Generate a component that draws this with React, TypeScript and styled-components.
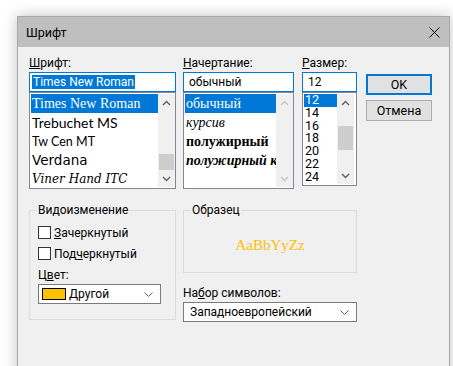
import React from 'react';
import styled, {createGlobalStyle} from 'styled-components';

const GlobalStyle = createGlobalStyle`
    html, body {
        margin: 0;
        padding: 0;
        background: #ffffff;
        overflow: hidden;
    }
    body {
        font-family: Roboto, "Segoe UI", sans-serif;
        font-size: 12px;
        color: #000000;
    }
`;

const Page = styled.div`
    padding: 16px 0 0 17px;
    height: 366px;
    box-sizing: border-box;
`;

const Dialog = styled.div`
    width: 433px;
    height: 380px;
    box-sizing: border-box;
    border: 1px solid #a9a9a9;
    background: #f0f0f0;
    box-shadow: 0 0 14px rgba(0, 0, 0, 0.24);
`;

const TitleBar = styled.div`
    height: 30px;
    background: #bfbfbf;
    display: flex;
    align-items: center;
    justify-content: space-between;
    padding: 0 9px 0 8px;
`;

const Title = styled.span`
    font-size: 12.5px;
`;

const Body = styled.div`
    padding: 9px 0 0 11px;
`;

const TopRow = styled.div`
    display: flex;
    align-items: flex-start;
`;

const Column = styled.div<{$width: number; $gap: number}>`
    width: ${({$width}) => $width}px;
    margin-right: ${({$gap}) => $gap}px;
    display: flex;
    flex-direction: column;
`;

const FieldLabel = styled.div<{$space?: number}>`
    height: 15px;
    line-height: 15px;
    margin-top: ${({$space}) => $space ?? 0}px;
    margin-bottom: 1px;
    white-space: nowrap;
`;

const Accel = styled.span`
    text-decoration: underline;
`;

const TextInput = styled.div`
    height: 20px;
    box-sizing: border-box;
    border: 1px solid #0078d7;
    background: #ffffff;
    padding-left: 2px;
    line-height: 18px;
    white-space: nowrap;
    overflow: hidden;
`;

const SelectedText = styled.span`
    background: #0078d7;
    color: #ffffff;
    padding: 0 1px;
`;

const ListBox = styled.div<{$height: number}>`
    height: ${({$height}) => $height}px;
    box-sizing: border-box;
    border: 1px solid #828790;
    background: #ffffff;
    display: flex;
    padding: 1px 0 0 1px;
`;

const ListItems = styled.div`
    flex: 1;
    min-width: 0;
    overflow: hidden;
`;

const ListItem = styled.div<{$selected?: boolean; $family: string; $size: number; $italic?: boolean; $bold?: boolean; $row: number}>`
    height: ${({$row}) => $row}px;
    line-height: ${({$row}) => $row}px;
    padding-left: 1px;
    white-space: nowrap;
    font-family: ${({$family}) => $family};
    font-size: ${({$size}) => $size}px;
    font-style: ${({$italic}) => ($italic ? 'italic' : 'normal')};
    font-weight: ${({$bold}) => ($bold ? 700 : 400)};
    background: ${({$selected}) => ($selected ? '#0078d7' : 'transparent')};
    color: ${({$selected}) => ($selected ? '#ffffff' : '#000000')};
`;

const ScrollBar = styled.div<{$inset?: number}>`
    width: 17px;
    margin-right: ${({$inset}) => $inset ?? 0}px;
    margin-bottom: 1px;
    background: #f0f0f0;
    display: flex;
    flex-direction: column;
`;

const ScrollArrow = styled.div`
    height: 17px;
    display: flex;
    align-items: center;
    justify-content: center;
`;

const ScrollTrack = styled.div`
    flex: 1;
    display: flex;
    flex-direction: column;
    align-items: center;
`;

const ScrollThumb = styled.div<{$offset: number; $length: number}>`
    margin-top: ${({$offset}) => $offset}px;
    height: ${({$length}) => $length}px;
    width: 15px;
    background: #cdcdcd;
`;

const ButtonColumn = styled.div`
    width: 66px;
    padding-top: 18px;
    display: flex;
    flex-direction: column;
    gap: 5px;
`;

const DialogButton = styled.div<{$primary?: boolean}>`
    height: 21px;
    box-sizing: border-box;
    background: #e1e1e1;
    border: ${({$primary}) => ($primary ? '2px solid #0078d7' : '1px solid #adadad')};
    display: flex;
    align-items: center;
    justify-content: center;
    font-size: 12.5px;
`;

const BottomRow = styled.div`
    display: flex;
    align-items: flex-start;
`;

const GroupBox = styled.div<{$width: number; $height: number}>`
    position: relative;
    width: ${({$width}) => $width}px;
    height: ${({$height}) => $height}px;
    margin-top: 21px;
    box-sizing: border-box;
    border: 1px solid #dcdcdc;
`;

const GroupLegend = styled.span`
    position: absolute;
    top: -8px;
    left: 7px;
    line-height: 15px;
    padding: 0 1px;
    background: #f0f0f0;
`;

const GroupContent = styled.div`
    padding: 15px 8px 0 8px;
`;

const CheckRow = styled.div`
    height: 13px;
    display: flex;
    align-items: center;
    gap: 3px;
    margin-bottom: 8px;
    white-space: nowrap;
`;

const CheckBox = styled.div`
    width: 13px;
    height: 13px;
    box-sizing: border-box;
    border: 1px solid #333333;
    background: #ffffff;
    flex-shrink: 0;
`;

const ComboBox = styled.div<{$width: number}>`
    width: ${({$width}) => $width}px;
    height: 20px;
    box-sizing: border-box;
    border: 1px solid #7a7a7a;
    background: #ffffff;
    display: flex;
    align-items: center;
    padding: 0 7px 0 3px;
    white-space: nowrap;
`;

const ComboText = styled.span`
    flex: 1;
    margin-left: 3px;
`;

const ColorSwatch = styled.div<{$color: string}>`
    width: 24px;
    height: 12px;
    box-sizing: border-box;
    border: 1px solid #000000;
    background: ${({$color}) => $color};
`;

const SampleArea = styled.div`
    height: 100%;
    display: flex;
    align-items: center;
    justify-content: center;
    padding-top: 8px;
    box-sizing: border-box;
`;

const SampleText = styled.span<{$color: string}>`
    font-family: "Liberation Serif", "Times New Roman", serif;
    font-size: 15px;
    color: ${({$color}) => $color};
`;

const RightColumn = styled.div`
    width: 174px;
    display: flex;
    flex-direction: column;
`;

const Chevron = ({up = false, color}: {up?: boolean; color: string}) => (
    <svg width='9' height='6' viewBox='0 0 9 6'>
        <path d={up ? 'M1 5 L4.5 1.5 L8 5' : 'M1 1 L4.5 4.5 L8 1'} fill='none' stroke={color} strokeWidth='1.4' />
    </svg>
);

const ComboChevron = () => (
    <svg width='9' height='5' viewBox='0 0 9 5'>
        <path d='M0.5 0.5 L4.5 4.5 L8.5 0.5' fill='none' stroke='#606060' strokeWidth='1' />
    </svg>
);

const CloseIcon = () => (
    <svg width='11' height='11' viewBox='0 0 11 11'>
        <path d='M0.5 0.5 L10.5 10.5 M10.5 0.5 L0.5 10.5' stroke='#000000' strokeWidth='1' />
    </svg>
);

interface ScrollProps {
    offset: number;
    length: number;
    disabled?: boolean;
    inset?: number;
}

const Scroller = ({offset, length, disabled, inset}: ScrollProps) => {
    const color = disabled ? '#c5c5c5' : '#606060';

    return (
        <ScrollBar $inset={inset}>
            <ScrollArrow><Chevron up color={color} /></ScrollArrow>
            <ScrollTrack>
                {!disabled && <ScrollThumb $offset={offset} $length={length} />}
            </ScrollTrack>
            <ScrollArrow><Chevron color={color} /></ScrollArrow>
        </ScrollBar>
    );
};

const fonts = [
    {name: 'Times New Roman', family: '"Liberation Serif", serif', size: 14},
    {name: 'Trebuchet MS', family: 'Lato, sans-serif', size: 14},
    {name: 'Tw Cen MT', family: 'Lato, sans-serif', size: 12.5},
    {name: 'Verdana', family: '"DejaVu Sans", sans-serif', size: 13.5},
    {name: 'Viner Hand ITC', family: '"DejaVu Serif", serif', size: 12, italic: true},
];

const styles = [
    {name: 'обычный'},
    {name: 'курсив', italic: true},
    {name: 'полужирный', bold: true},
    {name: 'полужирный курсив', bold: true, italic: true},
];

const sizes = ['12', '14', '16', '18', '20', '22', '24'];

const serif = '"Liberation Serif", serif';
const sans = 'Roboto, sans-serif';
const textColor = '#ffc000';

const App = () => {
    return (
        <>
            <GlobalStyle />
            <Page>
                <Dialog>
                    <TitleBar>
                        <Title>Шрифт</Title>
                        <CloseIcon />
                    </TitleBar>
                    <Body>
                        <TopRow>
                            <Column $width={147} $gap={7}>
                                <FieldLabel><Accel>Ш</Accel>рифт:</FieldLabel>
                                <TextInput><SelectedText>Times New Roman</SelectedText></TextInput>
                                <ListBox $height={97}>
                                    <ListItems>
                                        {fonts.map((font, index) => (
                                            <ListItem
                                                key={font.name}
                                                $row={19}
                                                $selected={0 === index}
                                                $family={font.family}
                                                $size={font.size}
                                                $italic={font.italic}
                                            >
                                                {font.name}
                                            </ListItem>
                                        ))}
                                    </ListItems>
                                    <Scroller offset={43} length={16} />
                                </ListBox>
                            </Column>
                            <Column $width={111} $gap={8}>
                                <FieldLabel><Accel>Н</Accel>ачертание:</FieldLabel>
                                <TextInput>&nbsp;обычный</TextInput>
                                <ListBox $height={97}>
                                    <ListItems>
                                        {styles.map((style, index) => (
                                            <ListItem
                                                key={style.name}
                                                $row={19}
                                                $selected={0 === index}
                                                $family={serif}
                                                $size={14}
                                                $italic={style.italic}
                                                $bold={style.bold}
                                            >
                                                {style.name}
                                            </ListItem>
                                        ))}
                                    </ListItems>
                                    <Scroller offset={0} length={0} disabled />
                                </ListBox>
                            </Column>
                            <Column $width={55} $gap={9}>
                                <FieldLabel><Accel>Р</Accel>азмер:</FieldLabel>
                                <TextInput>&nbsp;12</TextInput>
                                <ListBox $height={94}>
                                    <ListItems>
                                        {sizes.map((size, index) => (
                                            <ListItem
                                                key={size}
                                                $row={12.8}
                                                $selected={0 === index}
                                                $family={sans}
                                                $size={12.5}
                                            >
                                                {size}
                                            </ListItem>
                                        ))}
                                    </ListItems>
                                    <Scroller offset={15} length={24} inset={2} />
                                </ListBox>
                            </Column>
                            <ButtonColumn>
                                <DialogButton $primary>OK</DialogButton>
                                <DialogButton>Отмена</DialogButton>
                            </ButtonColumn>
                        </TopRow>
                        <BottomRow>
                            <Column $width={147} $gap={7}>
                                <GroupBox $width={147} $height={110}>
                                    <GroupLegend>Видоизменение</GroupLegend>
                                    <GroupContent>
                                        <CheckRow>
                                            <CheckBox />
                                            <span><Accel>З</Accel>ачеркнутый</span>
                                        </CheckRow>
                                        <CheckRow>
                                            <CheckBox />
                                            <span>Под<Accel>ч</Accel>еркнутый</span>
                                        </CheckRow>
                                        <FieldLabel $space={7}>Ц<Accel>в</Accel>ет:</FieldLabel>
                                        <ComboBox $width={123}>
                                            <ColorSwatch $color={textColor} />
                                            <ComboText>Другой</ComboText>
                                            <ComboChevron />
                                        </ComboBox>
                                    </GroupContent>
                                </GroupBox>
                            </Column>
                            <RightColumn>
                                <GroupBox $width={174} $height={63}>
                                    <GroupLegend>Образец</GroupLegend>
                                    <SampleArea>
                                        <SampleText $color={textColor}>AaBbYyZz</SampleText>
                                    </SampleArea>
                                </GroupBox>
                                <FieldLabel $space={13}>На<Accel>б</Accel>ор символов:</FieldLabel>
                                <ComboBox $width={174}>
                                    <ComboText>Западноевропейский</ComboText>
                                    <ComboChevron />
                                </ComboBox>
                            </RightColumn>
                        </BottomRow>
                    </Body>
                </Dialog>
            </Page>
        </>
    );
};

export default App;
